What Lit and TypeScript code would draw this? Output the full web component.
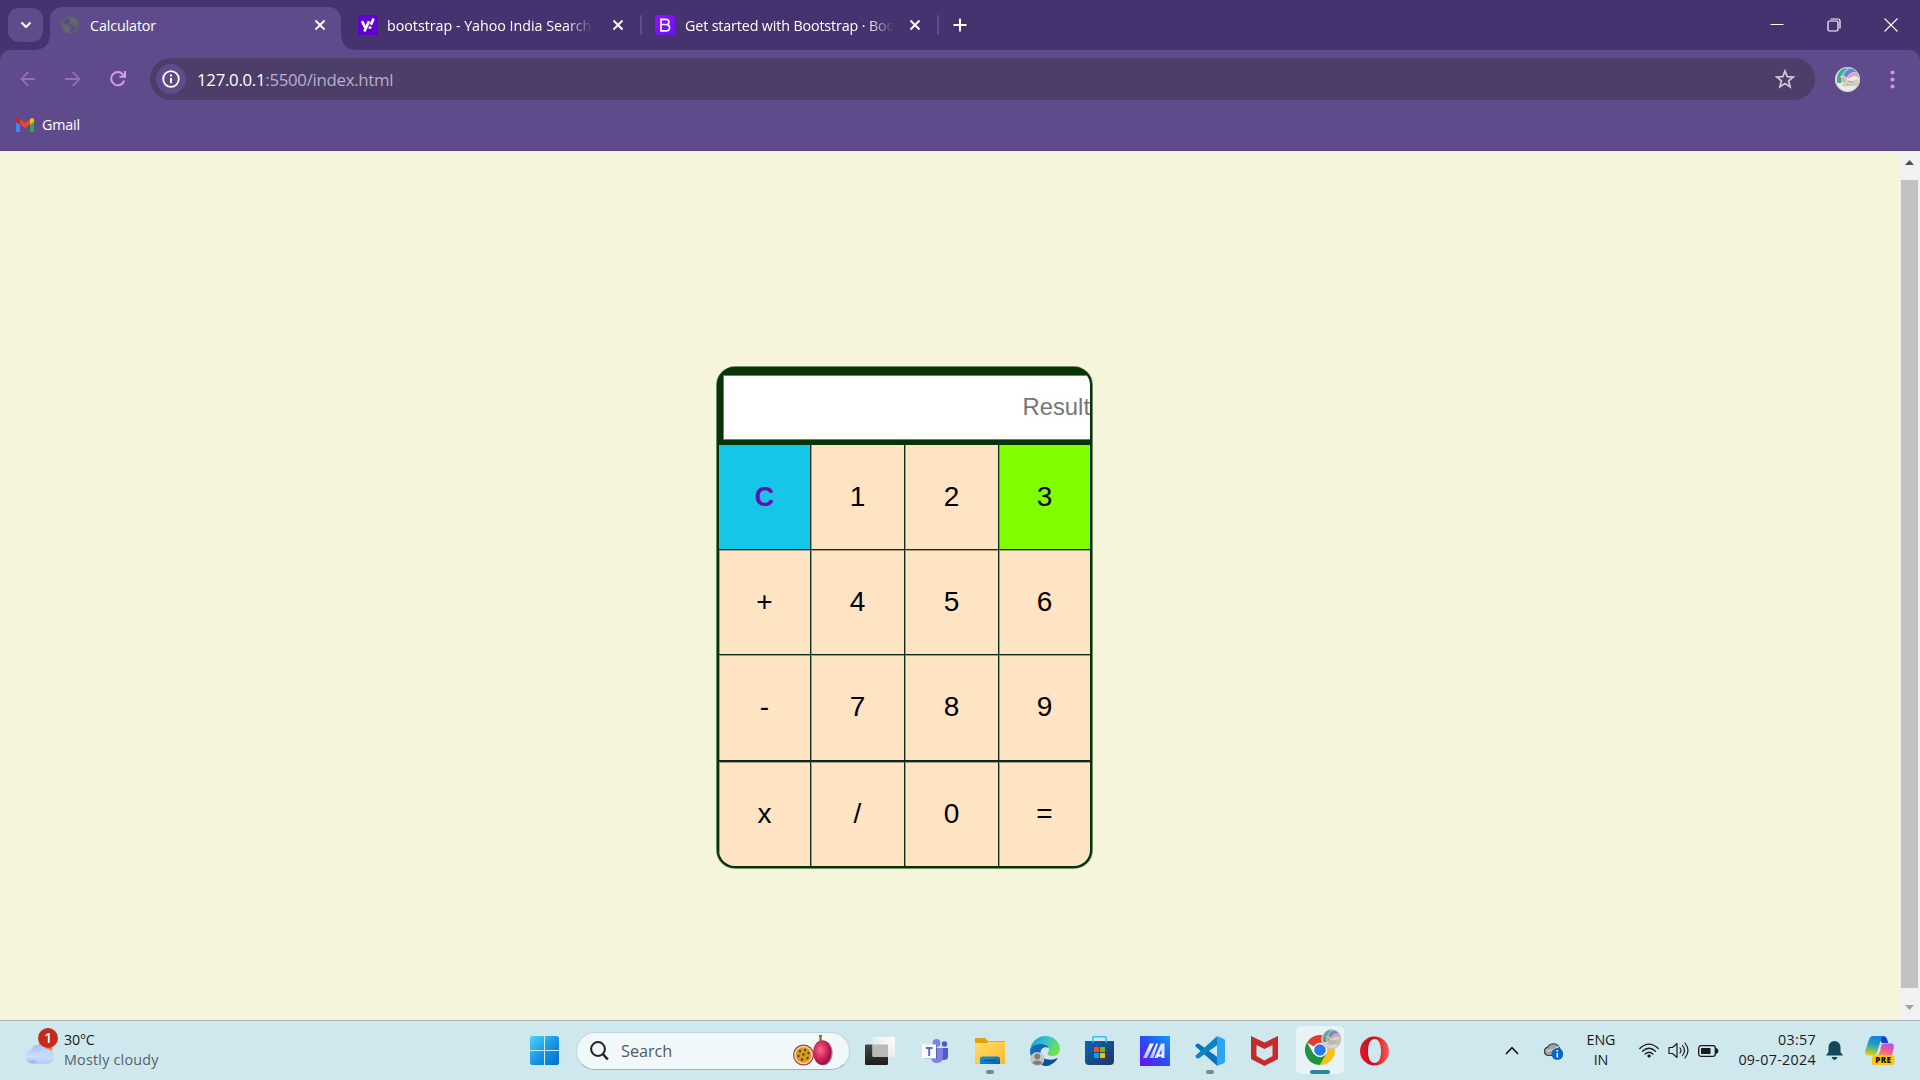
import { LitElement, html, css, svg } from "lit";
import { customElement } from "lit/decorators.js";
import { classMap } from "lit/directives/class-map.js";

const closeIcon = html`<svg width="12" height="12" viewBox="0 0 12 12" fill="none" stroke="#fff" stroke-width="1.9"><path d="M1.5 1.5l9 9M10.5 1.5l-9 9" /></svg>`;

const globeIcon = html`<svg width="18" height="18" viewBox="0 0 18 18">
  <circle cx="9" cy="9" r="8" fill="none" stroke="#5f6368" stroke-width="1.5" />
  <path d="M9 1C12 1.2 15.600 3 16.400 7.400C16 10 14 11 12.600 10.400C11.800 9.400 12.400 8.600 10 8.300C8 8 8 6 9.400 5.400C8.200 4 8.200 2.300 9 1zM1 8.500C4.500 8 7.500 8.500 8.300 10.200C9 11.500 10.600 11.300 10.600 12.500C10.600 14 8.500 13.700 8 16.800C4 16.600 1 13.400 1 8.500z" fill="#5f6a64" />
</svg>`;

const yahooIcon = html`<svg width="20" height="20" viewBox="0 0 20 20">
  <rect width="20" height="20" fill="#5f01d1" />
  <g fill="none" stroke="#fff" stroke-width="2.600"><path d="M4 6.200l3.200 6.200M11 6.200l-4.600 10.300" /><path d="M15.600 3.500l-2.700 6.300" stroke-width="2.700" /></g>
  <circle cx="12" cy="12.400" r="1.500" fill="#fff" />
</svg>`;

const bootstrapIcon = html`<svg width="20" height="20" viewBox="0 0 20 20">
  <defs><linearGradient id="bs" x1="0" y1="0" x2="1" y2="1"><stop offset="0" stop-color="#9013fe" /><stop offset="1" stop-color="#6610f2" /></linearGradient></defs>
  <rect width="20" height="20" rx="2.500" fill="url(#bs)" />
  <path d="M6 4.400h4.700c2.200 0 3.300 1.100 3.300 2.700c0 1.200-.7 2.100-1.900 2.500c1.600.3 2.500 1.400 2.500 2.900c0 2.100-1.500 3.400-3.900 3.400H6zM6 9.500h4.200M6 9v1" fill="none" stroke="#fff" stroke-width="1.600" />
</svg>`;

const gmailIcon = html`<svg width="18" height="14" viewBox="0 0 18 14">
  <path d="M0 3h4v11H1.300Q0 14 0 12.700z" fill="#4285f4" />
  <path d="M14 3h4v9.700q0 1.300-1.300 1.300H14z" fill="#34a853" />
  <path d="M4 1.300l5 3.800 5-3.800v5L9 10.200 4 6.300z" fill="#ea4335" />
  <path d="M0 4V2Q0 0 2 0q1 0 2 1.200v5.200z" fill="#c5221f" />
  <path d="M18 4V2q0-2-2-2-1 0-2 1.200v5.200z" fill="#fbbc04" />
</svg>`;

const avatarArt = svg`
  <circle cx="12.500" cy="12.500" r="12.500" fill="#ececea" />
  <path d="M2.500 16A12.500 12.500 0 0 1 12 0L9 9L6 16z" fill="#3cae8c" />
  <path d="M6 14C6 6 10 1 15 .5L19 1.500C12 3 9 8 9 14z" fill="#7cc5dc" />
  <path d="M9 9C10 4 15 1 19 1.700L23 6C17 4 13 7 12 11z" fill="#6d7edb" />
  <path d="M12 10C14 6 19 5 23 6.500L24.500 11C20 8 16 9 14 12z" fill="#dda7b4" />
  <path d="M5 9l3-1 3 2 2 4 5-.5 5-2 1 4-2 4-2-3-6 .500-4 3-3-1 1-4z" fill="#d9cfbb" />
  <path d="M7 11l2 1v3M11 18h10M13 14l6 2" stroke="#8e9696" stroke-width=".8" fill="none" />
  <circle cx="12.500" cy="12.500" r="12" fill="none" stroke="#c3c6c6" />`;

const windowsIcon = html`<svg width="29" height="29" viewBox="0 0 29 29">
  <defs><linearGradient id="win" gradientUnits="userSpaceOnUse" x1="0" y1="0" x2="29" y2="29"><stop offset="0" stop-color="#4fd4fb" /><stop offset=".5" stop-color="#1a97e6" /><stop offset="1" stop-color="#0270d0" /></linearGradient></defs>
  <path d="M1.500 0H14v14H0V1.500zM15 0h12.500L29 1.500V14H15zM0 15h14v14H1.500L0 27.500zM15 15h14v12.500L27.500 29H15z" fill="url(#win)" />
</svg>`;

const fruitIcon = html`<svg width="41" height="31" viewBox="0 0 41 31">
  <defs><radialGradient id="plum" cx=".4" cy=".4" r=".65"><stop offset="0" stop-color="#f56a8b" /><stop offset=".6" stop-color="#cf1f5a" /><stop offset="1" stop-color="#8a0f44" /></radialGradient></defs>
  <ellipse cx="30.500" cy="18" rx="9.300" ry="12.300" fill="#6d7596" opacity=".7" />
  <ellipse cx="29.300" cy="17.500" rx="9.300" ry="12.300" fill="url(#plum)" />
  <path d="M26 .8h3M27.500 1v5" stroke="#9b6428" stroke-width="2.200" />
  <circle cx="10.500" cy="20" r="10.500" fill="#a93a50" /><circle cx="10.500" cy="20" r="9.300" fill="#f7dc9a" /><circle cx="10.500" cy="20" r="7.800" fill="#d69a20" />
  <g fill="#5d4215"><circle cx="7" cy="16" r="1.200" /><circle cx="12" cy="15" r="1.200" /><circle cx="15.500" cy="18" r="1.200" /><circle cx="5.500" cy="21" r="1.200" /><circle cx="10.500" cy="19.500" r="1.200" /><circle cx="14.500" cy="23" r="1.200" /><circle cx="9" cy="24.500" r="1.200" /></g>
</svg>`;

const taskViewIcon = html`<svg width="30" height="28" viewBox="0 0 30 28">
  <defs><linearGradient id="tv" x1="0" y1="0" x2="0" y2="1"><stop offset="0" stop-color="#474747" /><stop offset="1" stop-color="#1c1c1c" /></linearGradient><linearGradient id="tw" x1="0" y1="1" x2="1" y2="0"><stop offset="0" stop-color="#dcdcdc" /><stop offset="1" stop-color="#ffffff" /></linearGradient></defs>
  <rect x="0" y="7.500" width="23" height="20.500" rx="1.300" fill="url(#tv)" />
  <rect x="7.500" y="0" width="22.500" height="20" rx="1.300" fill="url(#tw)" />
  <path d="M7.500 7.500H23V20H8.500Q7.500 20 7.500 19z" fill="#b9b9b9" />
</svg>`;

const teamsIcon = html`<svg width="26" height="24" viewBox="0 0 26 24">
  <circle cx="22.500" cy="5" r="2.700" fill="#5059c9" /><path d="M17 9h9v8.500q0 3-3.500 3.500H19z" fill="#5059c9" />
  <circle cx="14.500" cy="4" r="3.900" fill="#7b83eb" /><path d="M9 9h12v8q0 7-6 7t-6-6z" fill="#7b83eb" />
  <rect x="2" y="7" width="13" height="13" fill="#343b9b" opacity=".5" />
  <rect x="0" y="5.500" width="14" height="14" fill="#fff" /><path d="M3.800 9h6.800M7.200 9v8" stroke="#6068c4" stroke-width="2" />
</svg>`;

const explorerIcon = html`<svg width="30" height="28" viewBox="0 0 30 28">
  <defs><linearGradient id="fo" x1="0" y1="0" x2="1" y2="1"><stop offset="0" stop-color="#ffdc66" /><stop offset="1" stop-color="#fcbc28" /></linearGradient><linearGradient id="fb" x1="0" y1="0" x2="1" y2="1"><stop offset="0" stop-color="#1497dc" /><stop offset="1" stop-color="#0763b5" /></linearGradient></defs>
  <path d="M0 2Q0 1 1 1h9l3 3h16q1 0 1 1v5H0z" fill="#e0a10a" />
  <path d="M0 6h12l1.500-1.300H30V27H0z" fill="url(#fo)" />
  <path d="M5 27v-5q0-2.500 2.500-2.500h15q2.500 0 2.500 2.500v5z" fill="url(#fb)" /><path d="M8.500 23.500h13" stroke="#0a4b8c" stroke-width="1.100" />
</svg>`;

const edgeIcon = html`<svg width="30" height="30" viewBox="0 0 30 30">
  <defs><linearGradient id="e1" x1="0" y1="0" x2="1" y2=".5"><stop offset="0" stop-color="#1b95d1" /><stop offset=".5" stop-color="#35c1cd" /><stop offset="1" stop-color="#70e34c" /></linearGradient><linearGradient id="e2" x1="0" y1="0" x2="1" y2="1"><stop offset="0" stop-color="#0f6fc6" /><stop offset="1" stop-color="#1260a5" /></linearGradient></defs>
  <path d="M.5 13C1.500 5.500 8 0 15 0c9 0 15 6.500 15 12.500c0 5-3.500 7.500-7 7.500c-3.500 0-5.500-1-5.500-2.300c0-1 1.500-1.500 1.500-4C19 10.500 15.500 8 11.500 8C6 8 2 10.500.5 13z" fill="url(#e1)" />
  <path d="M0 15C0 10.500 5 8 10.500 8C15 8 18 10 19 12C14 10 10.500 12.500 10.500 17.500c0 6.500 6 12 11 11.800C12 31.500 0 26 0 15z" fill="url(#e2)" />
  <path d="M10.500 17.500c1 5 8 8.500 17.500 4.500c-3 5.500-9.500 8.500-14.500 7.800z" fill="#0d4f93" />
  <circle cx="7.300" cy="23" r="7" fill="#c9c5c2" /><circle cx="7.300" cy="20.500" r="2.900" fill="#827d7a" /><path d="M2.500 27.300Q3 24.500 7.300 24.500t4.800 2.800Q7.300 30.500 2.500 27.300z" fill="#827d7a" />
</svg>`;

const storeIcon = html`<svg width="29" height="29" viewBox="0 0 29 29">
  <defs><linearGradient id="st" x1="0" y1="0" x2="1" y2="1"><stop offset="0" stop-color="#0a66bb" /><stop offset="1" stop-color="#25345c" /></linearGradient></defs>
  <path d="M0 5h29v20q0 4-4 4H4q-4 0-4-4z" fill="url(#st)" /><path d="M7.800 6.500V2q0-1.200 1.200-1.200h11q1.200 0 1.200 1.200v4.500" fill="none" stroke="#36c0f2" stroke-width="1.600" />
  <path d="M9 11h5v5H9z" fill="#f25022" /><path d="M15 11h5v5h-5z" fill="#7fba00" /><path d="M9 17h5v5H9z" fill="#00a4ef" /><path d="M15 17h5v5h-5z" fill="#ffb900" />
</svg>`;

const asusIcon = html`<svg width="30" height="30" viewBox="0 0 30 30">
  <defs><linearGradient id="as" x1="0" y1="1" x2="1" y2="0"><stop offset="0" stop-color="#6a0cf8" /><stop offset=".5" stop-color="#2c4cf5" /><stop offset="1" stop-color="#0e9bf8" /></linearGradient><linearGradient id="sl" x1="0" y1="1" x2="0" y2="0"><stop offset="0" stop-color="#b9b6ff" /><stop offset="1" stop-color="#fff" /></linearGradient></defs>
  <rect width="30" height="30" fill="url(#as)" />
  <path d="M3 22L9.800 7.500h4L7 22zM9.500 22L16.300 7.500h1.700L13.500 22z" fill="url(#sl)" />
  <path d="M14.500 22L21 7.500h3.500V22h-3v-9L17.500 22z" fill="#e4e6ff" /><path d="M17 19.500h6" stroke="#fff" stroke-width="2.200" />
</svg>`;

const vscodeIcon = html`<svg width="30" height="30" viewBox="0 0 30 30">
  <path d="M.5 9Q1.500 7 3.500 7.500L22 20.800V29.800L.5 10.500z" fill="#0a72b8" />
  <path d="M.6 21q1 2 3 1.500L22 9.200V.2L.6 19.500z" fill="#0b83cd" />
  <path d="M22 0l6.500 2.800q1.500.7 1.500 2v20.400q0 1.300-1.500 2L22 30z" fill="#2aa5f2" />
</svg>`;

const mcafeeIcon = html`<svg width="27" height="30" viewBox="0 0 27 30">
  <path d="M0 0l13.500 6.500L27 0v23L13.500 30 0 23zM5.500 9v11l8 4.500 8-4.500V9l-8 4z" fill="#c62a2c" fill-rule="evenodd" />
</svg>`;

const chromeIcon = html`<svg width="38" height="38" viewBox="0 0 38 38">
  <path d="M15 21L2 13.500A15 15 0 0 1 28 13.500z" fill="#e33b2e" />
  <path d="M15 21L28 13.500A15 15 0 0 1 15 36z" fill="#fbc116" />
  <path d="M2 13.500A15 15 0 0 0 15 36L21.500 24.700 8.500 24.700z" fill="#229342" />
  <path d="M15 14h13.300a15 15 0 0 1 1.700 7a15 15 0 0 1-15 15l6.200-11z" fill="#fbc116" />
  <circle cx="15" cy="21" r="7.200" fill="#fff" /><circle cx="15" cy="21" r="5.800" fill="#2f78ed" />
  <g transform="translate(16.300 .3) scale(.8)" opacity=".95">${avatarArt}<circle cx="12.500" cy="12.500" r="12" fill="#8a8f90" opacity=".25" /></g>
</svg>`;

const operaIcon = html`<svg width="29" height="30" viewBox="0 0 29 30">
  <defs><linearGradient id="op" x1="0" y1="0" x2="1" y2="0"><stop offset="0" stop-color="#e3182c" /><stop offset=".45" stop-color="#c01020" /><stop offset="1" stop-color="#ff5a5a" /></linearGradient></defs>
  <path d="M14.500.500a14.500 14.500 0 1 0 0 29a14.500 14.500 0 1 0 0-29zM14.500 3c4.300 0 6.500 5 6.500 12s-2.200 12-6.500 12S8 22 8 15s2.200-12 6.500-12z" fill="url(#op)" fill-rule="evenodd" />
</svg>`;

const weatherIcon = html`<svg width="34" height="37" viewBox="0 0 34 37">
  <defs><linearGradient id="cl" x1="0" y1="0" x2="0" y2="1"><stop offset="0" stop-color="#a6bff0" /><stop offset=".65" stop-color="#cfe0fb" /><stop offset="1" stop-color="#93b1ec" /></linearGradient></defs>
  <circle cx="21" cy="20" r="7.500" fill="#f58220" />
  <path d="M7.500 35.500a7 7 0 0 1-.7-13.600A9 9 0 0 1 23 21.500a7 7 0 0 1 .5 14z" fill="url(#cl)" />
  <path d="M15 25.500a7.500 7.500 0 0 1 14 0q2 8-5 9.800H12z" fill="#c6d8f8" opacity=".75" />
  <circle cx="24" cy="10" r="10" fill="#c42b1c" /><text x="24.300" y="15" class="badge" text-anchor="middle">1</text>
</svg>`;

const copilotIcon = html`<svg width="30" height="29" viewBox="0 0 30 29">
  <defs>
    <linearGradient id="ca" x1=".5" y1="0" x2=".3" y2="1"><stop offset="0" stop-color="#1b7fe6" /><stop offset=".4" stop-color="#219ccc" /><stop offset=".7" stop-color="#74bd62" /><stop offset="1" stop-color="#f0cd1d" /></linearGradient>
    <linearGradient id="cb" x1=".7" y1="0" x2=".3" y2="1"><stop offset="0" stop-color="#a458ef" /><stop offset=".5" stop-color="#ec5a9c" /><stop offset="1" stop-color="#fa8a58" /></linearGradient>
  </defs>
  <path d="M12 0h6q3 0 4 3l1.400 4H17z" fill="#1b3fc4" />
  <path d="M8 0h11q-2 0-3 3.500l-4 13Q11 19.500 8 19.500H3Q-1 19.500.500 14L4 3.500Q5 0 8 0z" fill="url(#ca)" />
  <path d="M18 7.500h8q4 0 2.500 5.500l-1.500 6.500H12q2-1 3-4l1-5q.5-3 2-3z" fill="url(#cb)" />
  <rect x="7" y="19.500" width="22.500" height="9.500" rx="2" fill="#fdc50c" /><text x="18.300" y="27" class="pre" text-anchor="middle">PRE</text>
</svg>`;

const wifiIcon = html`<svg width="20" height="15" viewBox="0 0 20 15" fill="none" stroke="#1b1b1b" stroke-width="1.300" stroke-linecap="round">
  <path d="M.8 5.500Q10-3.200 19.200 5.500M3.500 8.300Q10 2.200 16.500 8.300M6.200 11Q10 7.500 13.800 11" /><circle cx="10" cy="13" r="1.300" fill="#1b1b1b" stroke-width=".6" />
</svg>`;

const volumeIcon = html`<svg width="21" height="17" viewBox="0 0 21 17" fill="none" stroke="#1b1b1b" stroke-width="1.200" stroke-linecap="round" stroke-linejoin="round">
  <path d="M1 5.500h3.500L9 1.500v14L4.500 11.500H1zM12 6q2 2.500 0 5M14.500 3.500q4 5 0 10M17 1q6 7.500 0 15" />
</svg>`;

const batteryIcon = html`<svg width="21" height="12" viewBox="0 0 21 12"><rect x=".7" y=".7" width="16.600" height="10.600" rx="2.300" fill="none" stroke="#1b1b1b" stroke-width="1.300" /><rect x="3" y="3" width="9.500" height="6" rx=".6" fill="#1b1b1b" /><path d="M18 3.500q2 .5 2 2.500t-2 2.500z" fill="#1b1b1b" stroke="#1b1b1b" /></svg>`;

const cloudSyncIcon = html`<svg width="20" height="18" viewBox="0 0 20 18">
  <path d="M5 13.500a4.300 4.300 0 0 1-.3-8.400A6.500 6.500 0 0 1 16 5l2 4-6 4.500z" fill="#a2a2a2" stroke="#3a3a3a" stroke-width="1.200" /><path d="M4 9q5 0 12-4.500" stroke="#eee" fill="none" />
  <circle cx="14.300" cy="12" r="5.900" fill="#0b66c3" /><path d="M14.300 11v4.500M14.300 8v1.700" stroke="#fff" stroke-width="1.500" />
</svg>`;

const bellIcon = html`<svg width="17" height="19" viewBox="0 0 17 19"><path d="M8.500 0Q14 0 14.500 6.500V11L17 14.500H0L2.500 11V6.500Q3 0 8.500 0zM5.500 16h6q-1 3-3 3t-3-3z" fill="#12485a" /></svg>`;

@customElement("app-tabs")
class AppTabs extends LitElement {
  static styles = css`
    :host { display: flex; height: 50px; background: #46326e; font: 14.300px/20px "Open Sans", "Noto Sans", sans-serif; color: #fff; align-items: center; box-sizing: border-box; }
    svg { display: block; flex: none; }
    .search { width: 35px; height: 34px; margin-left: 8px; border-radius: 11px; background: #5f4b8b; display: grid; place-items: center; }
    .tab { display: flex; align-items: center; box-sizing: border-box; flex: none; }
    .title { white-space: nowrap; padding-top: 1px; }
    .active { width: 291px; height: 43px; align-self: flex-end; margin-left: 7px; padding: 0 15px 7px 11px; background: #5f4b8b; border-radius: 12px 12px 0 0; position: relative; }
    .active::before, .active::after { content: ""; position: absolute; bottom: 0; width: 14px; height: 14px; }
    .active::before { left: -14px; background: radial-gradient(circle at 0 0, transparent 13.500px, #5f4b8b 14px); }
    .active::after { right: -14px; background: radial-gradient(circle at 100% 0, transparent 13.500px, #5f4b8b 14px); }
    .active .title { flex: 1; margin-left: 11px; letter-spacing: -0.120px; }
    .yahoo { width: 300px; padding-left: 17px; }
    .yahoo .title { width: 206px; margin: 0 19px 0 9px; letter-spacing: -0.030px; }
    .boot { width: 297px; padding-left: 14px; }
    .boot .title { width: 209px; margin: 0 15px 0 10px; letter-spacing: -0.140px; }
    .fade { -webkit-mask-image: linear-gradient(90deg, #000 calc(100% - 27px), transparent); mask-image: linear-gradient(90deg, #000 calc(100% - 27px), transparent); }
    .sep { width: 2px; height: 20px; background: #5f4b8b; border-radius: 1px; margin: 0 -1px; flex: none; }
    .plus { margin-left: 15px; }
    .window { margin-left: auto; display: flex; align-items: center; gap: 43px; padding-right: 22px; }
  `;
  render() {
    return html`
      <div class="search"><svg width="12" height="8" viewBox="0 0 12 8" fill="none" stroke="#fff" stroke-width="2.200"><path d="M1.500 1.500L6 6l4.500-4.500" /></svg></div>
      <div class="tab active">${globeIcon}<span class="title">Calculator</span>${closeIcon}</div>
      <div class="tab yahoo">${yahooIcon}<span class="title fade">bootstrap - Yahoo India Search</span>${closeIcon}</div>
      <div class="sep"></div>
      <div class="tab boot">${bootstrapIcon}<span class="title fade">Get started with Bootstrap · Boo</span>${closeIcon}</div>
      <div class="sep"></div>
      <svg class="plus" width="14" height="14" viewBox="0 0 14 14" stroke="#fff" stroke-width="2"><path d="M7 .5v13M.5 7h13" /></svg>
      <div class="window">
        <svg width="14" height="14" viewBox="0 0 14 14" stroke="#fff"><path d="M.5 6.500h13" /></svg>
        <svg width="14" height="14" viewBox="0 0 14 14" fill="none" stroke="#fff" stroke-width="1.200"><rect x="1" y="3" width="10" height="10" rx="1.500" /><path d="M3.500 1h7.500q2 0 2 2v7.500" /></svg>
        <svg width="14" height="14" viewBox="0 0 14 14" stroke="#fff" stroke-width="1.100"><path d="M.5.500l13 13M13.500.500l-13 13" /></svg>
      </div>`;
  }
}

@customElement("app-toolbar")
class AppToolbar extends LitElement {
  static styles = css`
    :host { display: block; background: #46326e; font-family: "Open Sans", "Noto Sans", sans-serif; color: #fff; }
    svg { display: block; flex: none; }
    .panel { height: 101px; background: #5f4b8b; border-radius: 10px 10px 0 0; box-sizing: border-box; padding-top: 8px; }
    .bar { display: flex; align-items: center; height: 42px; padding-left: 20px; }
    .nav { display: flex; gap: 29px; width: 130px; align-items: center; }
    .omni { width: 1665px; height: 42px; border-radius: 21px; background: #4c3d69; display: flex; align-items: center; box-sizing: border-box; padding: 0 20px 0 6px; }
    .info { width: 30px; height: 30px; border-radius: 50%; background: #5f4b8b; display: grid; place-items: center; margin-right: 11px; }
    .url { font-size: 16.800px; line-height: 24px; letter-spacing: -0.280px; flex: 1; color: #b9b0c9; padding-top: 1px; }
    .host { color: #fff; }
    .avatar { margin: 0 30px 0 20px; }
    .marks { display: flex; align-items: center; height: 50px; padding: 0 0 0 16px; gap: 8px; font-size: 14.300px; line-height: 20px; letter-spacing: -0.150px; }
    .marks span { margin-top: -1px; }
  `;
  render() {
    return html`<div class="panel">
      <div class="bar">
        <div class="nav">
          <svg width="16" height="16" viewBox="0 0 16 16" fill="none" stroke="#946db5" stroke-width="1.800"><path d="M15 8H1.500M8.300 1L1.500 8l6.800 7" /></svg>
          <svg width="16" height="16" viewBox="0 0 16 16" fill="none" stroke="#946db5" stroke-width="1.800"><path d="M0 8h14M7.700 1l6.800 7-6.800 7" /></svg>
          <svg width="16" height="16" viewBox="0 0 16 16" fill="none" stroke="#d59be8" stroke-width="2"><path d="M14.200 9.500A6.600 6.600 0 1 1 12.700 3.200L14.500 5M15 0v5.800H9.500" /></svg>
        </div>
        <div class="omni">
          <div class="info"><svg width="18" height="18" viewBox="0 0 18 18"><circle cx="9" cy="9" r="7.800" fill="none" stroke="#fff" stroke-width="1.800" /><path d="M9 8v5.200M9 4.600v2" stroke="#fff" stroke-width="2" /></svg></div>
          <span class="url"><span class="host">127.0.0.1</span>:5500/index.html</span>
          <svg width="20" height="20" viewBox="0 0 20 20" fill="none" stroke="#cbc7d2" stroke-width="1.800"><path d="M10 2l2.200 5.600 6 .4-4.600 3.800 1.500 5.900L10 14.500l-5.100 3.200 1.500-5.900L1.800 8l6-.4z" /></svg>
        </div>
        <svg class="avatar" width="25" height="25" viewBox="0 0 25 25">${avatarArt}</svg>
        <svg width="5" height="19" viewBox="0 0 5 19" fill="#d88fe6"><circle cx="2.500" cy="2.500" r="2.100" /><circle cx="2.500" cy="9.500" r="2.100" /><circle cx="2.500" cy="16.500" r="2.100" /></svg>
      </div>
      <div class="marks">${gmailIcon}<span>Gmail</span></div>
    </div>`;
  }
}

@customElement("app-calculator")
class AppCalculator extends LitElement {
  static styles = css`
    :host { display: block; width: 375px; height: 501px; box-sizing: border-box; border: 2px solid #063406; border-radius: 18px; overflow: hidden; background: #063406; box-shadow: 0 0 0 0.800px #4d6f49; font-family: "Liberation Sans", Arial, sans-serif; color: #000; }
    .screen { height: 76px; box-sizing: border-box; padding: 6px 0 5px 4px; }
    .display { height: 65px; box-sizing: border-box; border: 1px solid #6f7f6d; border-right: 0; background: #fff; color: #757575; font-size: 23.800px; line-height: 62px; text-align: right; }
    .keys { display: grid; grid-template-columns: 91px 94px 94px 92px; grid-template-rows: 104px 105px 106px 106px; }
    .key { box-sizing: border-box; border-left: 1px solid #0c2b1f; border-top: 1px solid #0c2b1f; background: #ffe4c4; box-shadow: inset 1px 1px 0 #a79a85; font-size: 28px; line-height: 103px; text-align: center; }
    .first { border-left: 0; }
    .top { border-top: 0; box-shadow: inset 1px 0 0 #a79a85; line-height: 103px; }
    .last { border-top-width: 2px; }
    .clear { background: #14c6e8; color: #6a0dad; font-weight: 700; box-shadow: none; font-size: 27px; line-height: 104px; }
    .three { background: #80ff00; box-shadow: inset 1px 0 0 #67bb17; }
  `;
  private keys = ["C", "1", "2", "3", "+", "4", "5", "6", "-", "7", "8", "9", "x", "/", "0", "="];
  render() {
    return html`<div class="screen"><div class="display">Result</div></div>
      <div class="keys">${this.keys.map((k, i) => html`<div class=${classMap({ key: true, first: i % 4 === 0, top: i < 4, last: i > 11, clear: k === "C", three: k === "3" })}>${k}</div>`)}</div>`;
  }
}

@customElement("app-taskbar")
class AppTaskbar extends LitElement {
  static styles = css`
    :host { display: flex; height: 60px; box-sizing: border-box; border-top: 1px solid #a9b4b9; background: #cfe8ee; font: 14.300px/20px "Open Sans", "Noto Sans", sans-serif; color: #1b1b1b; align-items: center; }
    svg { display: block; flex: none; }
    .badge { font: 600 14px "Open Sans", sans-serif; fill: #fff; }
    .pre { font: 800 8px "Open Sans", sans-serif; letter-spacing: 0.400px; fill: #111; }
    .weather { display: flex; width: 506px; padding-left: 24px; gap: 6px; align-items: center; }
    .weather svg { margin-top: -8px; }
    .report { margin-top: -2px; }
    .temp { letter-spacing: -0.200px; }
    .sky { color: #566065; letter-spacing: 0.240px; }
    .search { width: 274px; height: 38px; box-sizing: border-box; margin: 0 2px 0 17px; border-radius: 19px; background: #f0f8fa; border: 1px solid #bfd5db; border-bottom-color: #9fb1b7; display: flex; align-items: center; padding: 0 15px 0 13px; font-size: 16.300px; color: #535a5e; }
    .search span { flex: 1; margin-left: 12px; letter-spacing: -0.050px; }
    .app { width: 55px; height: 59px; display: flex; flex-direction: column; align-items: center; justify-content: center; position: relative; }
    .current::before { content: ""; position: absolute; inset: 5px 3px 6px 4px; border-radius: 5px; background: #e8f3f7; }
    .current svg { position: relative; margin: -6px 0 0 9px; }
    .app i { position: absolute; bottom: 6px; width: 8px; height: 4px; border-radius: 2px; background: #7b878b; }
    .current i { width: 20px; background: #28889a; }
    .tray { margin-left: auto; display: flex; align-items: center; padding-right: 25px; }
    .lang { width: 76px; text-align: center; letter-spacing: -0.100px; margin-top: -1px; }
    .net { display: flex; align-items: center; gap: 9px; }
    .clock { width: 97px; text-align: right; letter-spacing: 0.300px; margin: -1px 10px 0 0; }
    .cloud { margin-left: 24px; }
    .copilot { margin-left: 22px; }
  `;
  render() {
    const apps = [
      { icon: taskViewIcon }, { icon: teamsIcon }, { icon: explorerIcon, open: true }, { icon: edgeIcon }, { icon: storeIcon },
      { icon: asusIcon }, { icon: vscodeIcon, open: true }, { icon: mcafeeIcon }, { icon: chromeIcon, open: true, current: true }, { icon: operaIcon },
    ];
    return html`
      <div class="weather">${weatherIcon}<div class="report"><div class="temp">30°C</div><div class="sky">Mostly cloudy</div></div></div>
      ${windowsIcon}
      <div class="search">
        <svg width="19" height="20" viewBox="0 0 19 20" fill="none" stroke="#202020" stroke-width="2"><circle cx="8" cy="8" r="6.900" /><path d="M12.800 13l5 5.500" stroke-width="2.600" /></svg>
        <span>Search</span>${fruitIcon}
      </div>
      ${apps.map((a: any) => html`<div class=${classMap({ app: true, current: !!a.current })}>${a.icon}${a.open ? html`<i></i>` : ""}</div>`)}
      <div class="tray">
        <svg width="14" height="9" viewBox="0 0 14 9" fill="none" stroke="#1b1b1b" stroke-width="1.800"><path d="M1 8l6-6.300L13 8" /></svg>
        <div class="cloud">${cloudSyncIcon}</div>
        <div class="lang">ENG<br />IN</div>
        <div class="net">${wifiIcon}${volumeIcon}${batteryIcon}</div>
        <div class="clock">03:57<br />09-07-2024</div>
        ${bellIcon}
        <div class="copilot">${copilotIcon}</div>
      </div>`;
  }
}

@customElement("app-root")
class AppRoot extends LitElement {
  static styles = css`
    :host { display: flex; flex-direction: column; width: 1920px; height: 1080px; overflow: hidden; }
    .page { display: flex; height: 869px; background: #f5f5dc; }
    .content { width: 1899px; box-sizing: border-box; padding: 216px 0 0 717px; }
    .scroll { width: 21px; box-sizing: border-box; background: #f1f1f1; display: flex; flex-direction: column; align-items: center; padding: 9px 1px 8px 0; }
    .thumb { width: 17px; height: 808px; background: #c1c1c1; margin: 15px 0 17px 1px; }
  `;
  render() {
    return html`
      <app-tabs></app-tabs>
      <app-toolbar></app-toolbar>
      <div class="page">
        <div class="content"><app-calculator></app-calculator></div>
        <div class="scroll">
          <svg width="9" height="5" viewBox="0 0 9 5"><path d="M0 5L4.500 0 9 5z" fill="#505050" /></svg>
          <div class="thumb"></div>
          <svg width="9" height="5" viewBox="0 0 9 5"><path d="M0 0h9L4.500 5z" fill="#a3a3a3" /></svg>
        </div>
      </div>
      <app-taskbar></app-taskbar>`;
  }
}
